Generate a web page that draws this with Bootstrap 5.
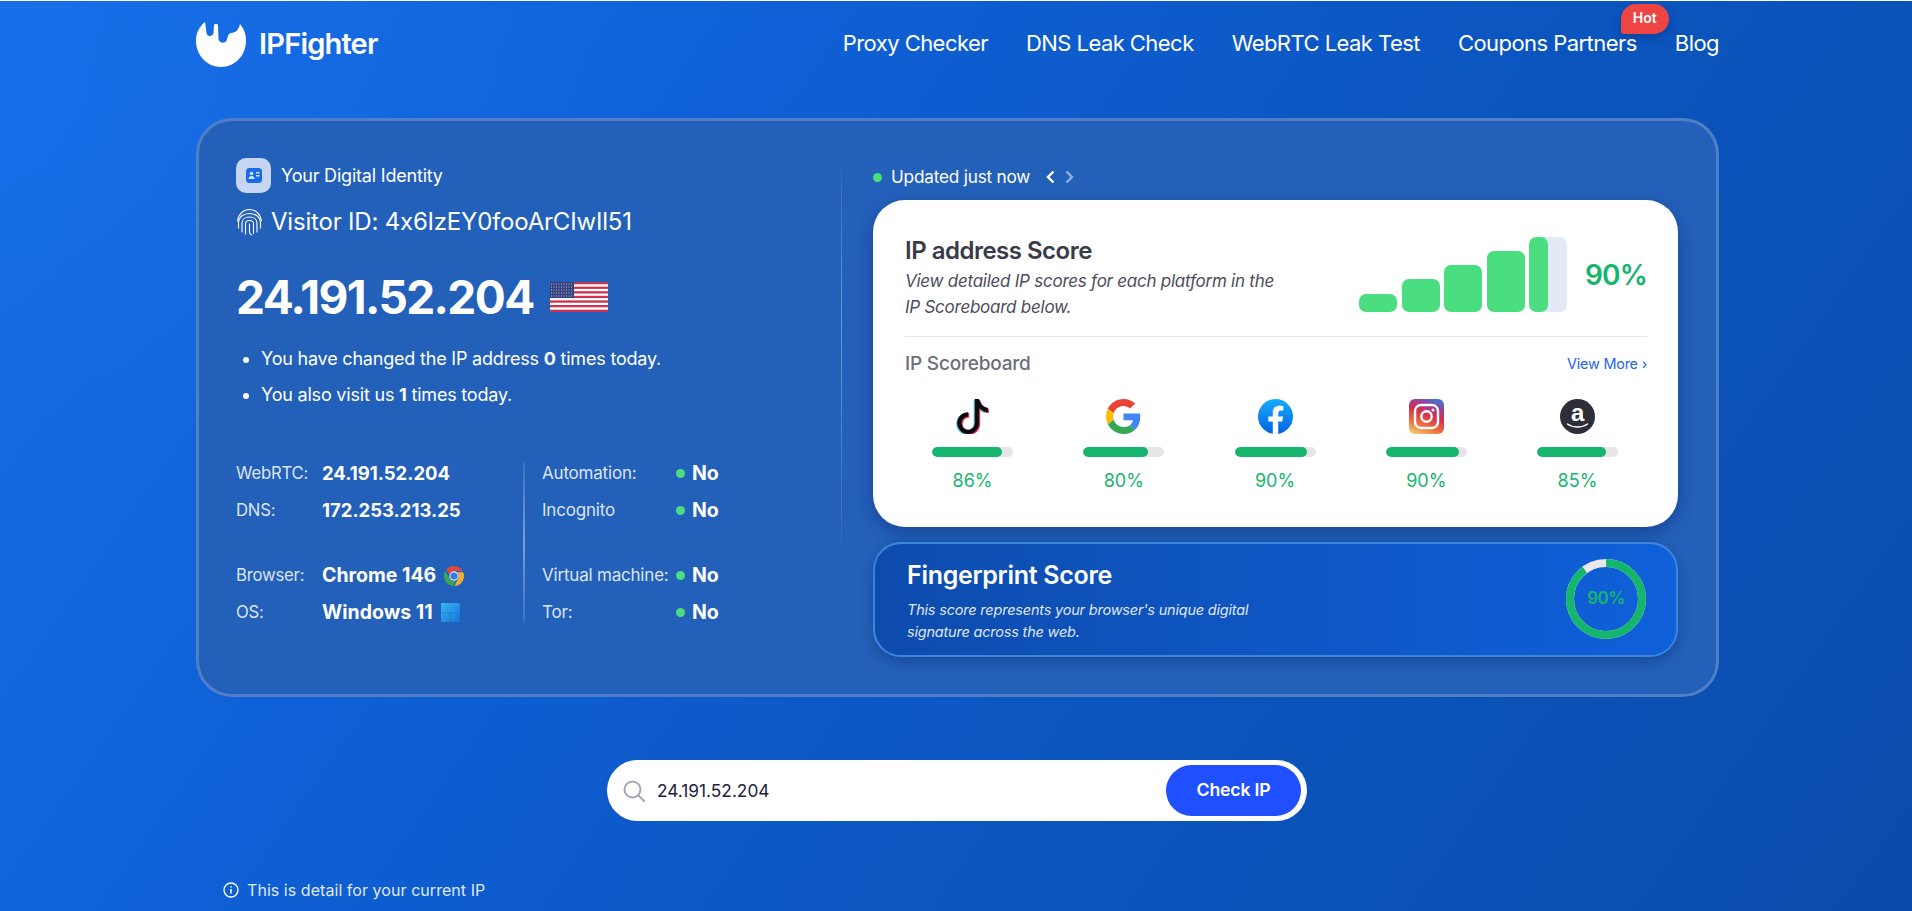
<!DOCTYPE html>
<html lang="en">
<head>
  <meta charset="UTF-8">
  <meta name="viewport" content="width=device-width, initial-scale=1">
  <title>IPFighter</title>
  <link href="https://cdn.jsdelivr.net/npm/bootstrap@5.3.0/dist/css/bootstrap.min.css" rel="stylesheet">
  <style>
    body {
      font-family: "Inter", "Noto Sans", sans-serif;
      letter-spacing: -.2px;
      color: #fff;
      border-top: 1px solid #fff;
      overflow: hidden;
      min-height: 911px;
      background:
        radial-gradient(ellipse 620px 300px at 0 120px, rgba(40,130,255,.12), transparent 100%),
        linear-gradient(125deg, #176ee8 0%, #0f60d6 32%, #0b55bf 62%, #0a4cab 100%);
    }
    .page-wrap { width: 1523px; margin-left: 196px; }
    .top-bar { height: 85px; }
    .logo-text { font-size: 29px; font-weight: 600; letter-spacing: -.8px; margin-left: 13px; }
    .top-links { gap: 38px; }
    .top-links a { color: #fff; text-decoration: none; font-size: 22px; letter-spacing: -.55px; }
    .hot-tag {
      top: -23px; right: -32px; width: 48px; height: 30px;
      background: #ef4444; border-radius: 15px 15px 15px 3px;
      font-size: 14px; font-weight: 600; line-height: 28px; text-align: center; letter-spacing: 0;
      box-shadow: 0 3px 8px rgba(10,40,110,.4);
    }
    .main-panel {
      margin-top: 32px; height: 579px; padding: 37px 36px 36px 37px;
      background: #2360b9; border: 3px solid rgba(255,255,255,.2); border-radius: 36px;
    }
    .left-col { width: 605px; flex: none; }
    .id-icon { width: 35px; height: 35px; border-radius: 10px; background: #c6d6f2; }
    .id-title { font-size: 18px; margin-left: 10px; }
    .visitor-row { margin-top: 14px; height: 30px; font-size: 24px; letter-spacing: -.2px; }
    .ip-row { margin-top: 30px; height: 60px; }
    .ip-big { font-size: 46px; font-weight: 700; letter-spacing: -1.6px; line-height: 60px; }
    .visit-list { margin: 14px 0 0; padding: 0 0 0 25px; font-size: 18px; }
    .visit-list li { height: 36px; line-height: 36px; }
    .info-grid { margin-top: 42px; }
    .info-left { width: 287px; }
    .info-line { height: 37px; align-items: center; display: flex; }
    .info-gap { height: 28px; }
    .info-key { width: 86px; font-size: 16.700px; color: rgba(255,255,255,.85); flex: none; }
    .info-val { font-size: 18.500px; font-weight: 700; letter-spacing: 0; }
    .info-name { font-size: 19.500px; font-weight: 700; letter-spacing: 0; }
    .info-split { width: 2px; margin: 8px 17px 8px 0; background: linear-gradient(180deg, rgba(255,255,255,.1), rgba(255,255,255,.4) 50%, rgba(255,255,255,.1)); }
    .flag-key { width: 134px; font-size: 17px; color: rgba(255,255,255,.85); flex: none; white-space: nowrap; }
    .ok-dot { width: 9px; height: 9px; border-radius: 50%; background: #4ade80; margin-right: 7px; flex: none; }
    .col-split { width: 1px; height: 380px; margin: 10px 31px 0 0; background: linear-gradient(180deg, rgba(255,255,255,.05), rgba(255,255,255,.35) 40%, rgba(255,255,255,.05)); flex: none; }
    .right-col { width: 805px; padding-top: 7px; }
    .updated-row { height: 24px; margin-bottom: 11px; font-size: 17.200px; }
    .updated-row .ok-dot { margin-left: 0; margin-right: 9px; }
    .score-box {
      height: 327px; padding: 36px 31px 0 32px; background: #fff; border-radius: 32px; color: #3a3a48;
      box-shadow: 0 6px 16px rgba(10,40,110,.45);
    }
    .score-top { height: 101px; border-bottom: 1px solid #e4e6ea; }
    .score-title { font-size: 24px; font-weight: 600; line-height: 30px; letter-spacing: -.5px; }
    .score-sub { font-size: 17px; font-style: italic; line-height: 26px; margin: 2px 0 0; width: 385px; color: #4d4d5c; letter-spacing: -.25px; }
    .signal { gap: 4.500px; height: 75px; margin-top: 1px; }
    .sig-bar { width: 38px; background: #4ade80; border-radius: 7px; }
    .sig-track { width: 38px; height: 75px; background: #e2eaf8; border-radius: 7px; overflow: hidden; }
    .sig-fill { width: 19px; height: 100%; background: #4ade80; border-radius: 7px; }
    .score-num { width: 62px; margin: 18px 0 0 18px; font-size: 28px; font-weight: 600; color: #16b56e; letter-spacing: -.8px; white-space: nowrap; }
    .board-head { margin-top: 12px; height: 30px; }
    .board-title { font-size: 19px; font-weight: 500; color: #6d6d7a; }
    .board-more { font-size: 14.400px; color: #2563eb; text-decoration: none; }
    .board-row { margin-top: 20px; padding: 0 29px 0 27px; }
    .board-item { width: 81px; text-align: center; }
    .board-item svg { display: block; margin: 0 auto; }
    .board-bar { height: 10px; margin-top: 13px; background: #e6e6e8; border-radius: 5px; }
    .board-bar .progress-bar { background: #16b56e; border-radius: 5px; }
    .board-pct { margin-top: 11px; line-height: 26px; font-size: 18px; color: #16b56e; letter-spacing: 0; }
    .print-box {
      height: 115px; margin-top: 15px; padding: 16px 30px 0 32px;
      background: linear-gradient(90deg, #0d4cad, #0f60da); border: 2px solid #3b86dc; border-radius: 28px;
      box-shadow: 0 5px 12px rgba(10,40,110,.4);
    }
    .print-title { font-size: 25px; font-weight: 600; line-height: 30px; letter-spacing: -.3px; }
    .print-sub { font-size: 14.500px; font-style: italic; line-height: 22px; margin: 9px 0 0; width: 360px; color: rgba(255,255,255,.88); }
    .ring-wrap { width: 80px; height: 80px; margin-top: -1px; }
    .ring-num { font-size: 17px; font-weight: 600; color: #16b56e; letter-spacing: -.5px; }
    .search-box { width: 700px; height: 61px; margin: 63px 0 0 411px; padding: 5px 6px 5px 16px; background: #fff; border-radius: 31px; }
    .search-input { font-size: 17.300px; color: #1e2240; letter-spacing: 0; padding: 0 0 0 12px; height: 51px; background: transparent; }
    .check-btn { width: 135px; height: 51px; background: #1f4fff; border-radius: 26px; font-size: 17.700px; font-weight: 600; flex: none; padding: 0; letter-spacing: -.2px; }
    .check-btn:hover { background: #1f4fff; }
    .current-note { margin: 57px 0 0 27px; height: 24px; font-size: 16px; color: rgba(255,255,255,.88); letter-spacing: .05px; }
  </style>
</head>
<body>

<div class="page-wrap">
  <nav class="top-bar d-flex align-items-center justify-content-between">
    <a class="d-flex align-items-center text-white text-decoration-none" href="#">
      <svg width="50" height="46" viewBox="0 0 50 46"><path fill="#fff" d="M9 1C4 5 0 11 0 20c0 14 11 26 25 26s25-12 25-26c0-7-2-12-6-17-1 5-4 9-9 9-2 0-3 2-4 6-.5 5-7.5 5-8.500 0L22 4q-2-2.500-4 0l-.5 8c-.5 4-6.500 4-7 0z"/></svg>
      <span class="logo-text">IPFighter</span>
    </a>
    <div class="top-links d-flex align-items-center">
      <a href="#">Proxy Checker</a>
      <a href="#">DNS Leak Check</a>
      <a href="#">WebRTC Leak Test</a>
      <a href="#" class="position-relative">Coupons Partners<span class="hot-tag position-absolute">Hot</span></a>
      <a href="#">Blog</a>
    </div>
  </nav>

  <section class="main-panel d-flex">
    <div class="left-col">
      <div class="d-flex align-items-center">
        <span class="id-icon d-flex align-items-center justify-content-center">
          <svg width="16" height="15" viewBox="0 0 16 15"><rect width="16" height="15" rx="3.500" fill="#1a6de8"/><circle cx="5.500" cy="5.500" r="1.800" fill="#d5e3fa"/><path fill="#d5e3fa" d="M2.500 11c0-2 1.300-3 3-3s3 1 3 3z"/><rect x="10" y="4" width="3.500" height="1.500" fill="#d5e3fa"/><rect x="10" y="7" width="3.500" height="1.500" fill="#d5e3fa"/></svg>
        </span>
        <span class="id-title">Your Digital Identity</span>
      </div>
      <div class="visitor-row d-flex align-items-center">
        <svg class="me-2" width="27" height="28" viewBox="0 0 27 28" fill="none" stroke="#fff" stroke-width="1.100" stroke-linecap="round"><path d="M1.500 13C2.500 6 7.500 1.500 13.500 1.500S24.500 6 25.500 13"/><path d="M2.500 20v-5c0-6 5-9.500 11-9.500s11 3.500 11 9.500v5"/><path d="M6 24v-9c0-3.800 3.300-6 7.500-6s7.500 2.200 7.500 6v9"/><path d="M9.500 26V15.500c0-2 1.800-3 4-3s4 1 4 3v10"/><path d="M13.500 16v8c0 1.500.8 2.500 2 3"/></svg>
        <span>Visitor ID: 4x6IzEY0fooArCIwIl51</span>
      </div>
      <div class="ip-row d-flex align-items-center">
        <span class="ip-big">24.191.52.204</span>
        <svg class="ms-3" width="58" height="30" viewBox="0 0 58 30">
          <rect width="58" height="30" fill="#fff"/>
          <g fill="#c8354f"><rect width="58" height="2.300"/><rect y="4.600" width="58" height="2.300"/><rect y="9.200" width="58" height="2.300"/><rect y="13.800" width="58" height="2.300"/><rect y="18.400" width="58" height="2.300"/><rect y="23" width="58" height="2.300"/><rect y="27.700" width="58" height="2.300"/></g>
          <rect width="24" height="16" fill="#33417e"/>
          <g stroke="#c5cbe2" stroke-width="1" stroke-dasharray="1 1.500"><path d="M1 2h22M1 5h22M1 8h22M1 11h22M1 14h22"/></g>
        </svg>
      </div>
      <ul class="visit-list">
        <li>You have changed the IP address <b>0</b> times today.</li>
        <li>You also visit us <b>1</b> times today.</li>
      </ul>
      <div class="info-grid d-flex">
        <div class="info-left">
          <div class="info-line"><span class="info-key">WebRTC:</span><span class="info-val">24.191.52.204</span></div>
          <div class="info-line"><span class="info-key">DNS:</span><span class="info-val">172.253.213.25</span></div>
          <div class="info-gap"></div>
          <div class="info-line"><span class="info-key">Browser:</span><span class="info-name">Chrome 146</span>
            <svg class="ms-2" width="20" height="20" viewBox="0 0 20 20"><path fill="#e0483c" d="M10 0a10 10 0 0 1 8.660 5H10a5 5 0 0 0-4.800 3.600L2.300 3.600A10 10 0 0 1 10 0z"/><path fill="#3aa655" d="M1.300 5A10 10 0 0 0 9 19.950l3-5.200A5 5 0 0 1 5.700 12.500z"/><path fill="#f4ae2c" d="M19.300 6.300H13.200a5 5 0 0 1 1.100 6.200L10.500 20A10 10 0 0 0 19.300 6.300z"/><circle cx="10" cy="10" r="4.700" fill="#e4edf9"/><circle cx="10" cy="10" r="3.600" fill="#3678dc"/></svg>
          </div>
          <div class="info-line"><span class="info-key">OS:</span><span class="info-name">Windows 11</span>
            <svg class="ms-2" width="19" height="19" viewBox="0 0 19 19"><defs><linearGradient id="winBlue" x1="0" y1="0" x2="1" y2="1"><stop offset="0" stop-color="#38b6f4"/><stop offset="1" stop-color="#1673d8"/></linearGradient></defs><rect width="19" height="19" rx="1" fill="url(#winBlue)"/><path d="M9.500 10v9M0 10h19" stroke="#1a78d6" stroke-width=".8"/></svg>
          </div>
        </div>
        <div class="info-split"></div>
        <div>
          <div class="info-line"><span class="flag-key">Automation:</span><span class="ok-dot"></span><span class="info-name">No</span></div>
          <div class="info-line"><span class="flag-key">Incognito</span><span class="ok-dot"></span><span class="info-name">No</span></div>
          <div class="info-gap"></div>
          <div class="info-line"><span class="flag-key">Virtual machine:</span><span class="ok-dot"></span><span class="info-name">No</span></div>
          <div class="info-line"><span class="flag-key">Tor:</span><span class="ok-dot"></span><span class="info-name">No</span></div>
        </div>
      </div>
    </div>

    <div class="col-split"></div>

    <div class="right-col">
      <div class="updated-row d-flex align-items-center">
        <span class="ok-dot"></span><span>Updated just now</span>
        <svg class="ms-3" width="10" height="14" viewBox="0 0 10 14" fill="none" stroke="#fff" stroke-width="2.400"><path d="M7.500 1.500 2 7l5.500 5.500"/></svg>
        <svg class="ms-2" width="10" height="14" viewBox="0 0 10 14" fill="none" stroke="#8fb0e4" stroke-width="2.400"><path d="M2.500 1.500 8 7l-5.500 5.500"/></svg>
      </div>

      <div class="score-box">
        <div class="score-top d-flex justify-content-between">
          <div>
            <div class="score-title">IP address Score</div>
            <p class="score-sub">View detailed IP scores for each platform in the IP Scoreboard below.</p>
          </div>
          <div class="d-flex">
            <div class="signal d-flex align-items-end">
              <div class="sig-bar" style="height:18px"></div>
              <div class="sig-bar" style="height:33px"></div>
              <div class="sig-bar" style="height:47px"></div>
              <div class="sig-bar" style="height:61px"></div>
              <div class="sig-track"><div class="sig-fill"></div></div>
            </div>
            <div class="score-num align-self-start">90%</div>
          </div>
        </div>

        <div class="board-head d-flex align-items-center justify-content-between">
          <span class="board-title">IP Scoreboard</span>
          <a class="board-more" href="#">View More ›</a>
        </div>

        <div class="board-row d-flex justify-content-between">
          <div class="board-item">
            <svg width="35" height="35" viewBox="0 0 16 16"><path fill="#5fd3e0" transform="translate(-.5 .4)" d="M9 0h1.980c.144.715.54 1.617 1.235 2.512C12.895 3.389 13.797 4 15 4v2c-1.753 0-3.070-.814-4-1.829V11a5 5 0 1 1-5-5v2a3 3 0 1 0 3 3V0Z"/><path fill="#ee2a58" transform="translate(.5 .4)" d="M9 0h1.980c.144.715.54 1.617 1.235 2.512C12.895 3.389 13.797 4 15 4v2c-1.753 0-3.070-.814-4-1.829V11a5 5 0 1 1-5-5v2a3 3 0 1 0 3 3V0Z"/><path fill="#0a0a0f" d="M9 0h1.980c.144.715.54 1.617 1.235 2.512C12.895 3.389 13.797 4 15 4v2c-1.753 0-3.070-.814-4-1.829V11a5 5 0 1 1-5-5v2a3 3 0 1 0 3 3V0Z"/></svg>
            <div class="progress board-bar"><div class="progress-bar" style="width:86%"></div></div>
            <div class="board-pct">86%</div>
          </div>
          <div class="board-item">
            <svg width="35" height="35" viewBox="0 0 48 48"><path fill="#EA4335" d="M24 9.500c3.540 0 6.710 1.220 9.210 3.600l6.850-6.850C35.900 2.380 30.470 0 24 0 14.620 0 6.510 5.380 2.560 13.220l7.980 6.190C12.430 13.720 17.740 9.500 24 9.500z"/><path fill="#4285F4" d="M46.980 24.550c0-1.570-.15-3.090-.38-4.550H24v9.020h12.940c-.58 2.960-2.260 5.480-4.780 7.180l7.730 6c4.510-4.180 7.090-10.360 7.090-17.650z"/><path fill="#FBBC05" d="M10.530 28.590c-.48-1.450-.76-2.990-.76-4.590s.27-3.140.76-4.590l-7.980-6.190C.92 16.460 0 20.120 0 24c0 3.880.92 7.540 2.560 10.780l7.970-6.190z"/><path fill="#34A853" d="M24 48c6.480 0 11.930-2.130 15.890-5.810l-7.730-6c-2.150 1.450-4.920 2.300-8.160 2.300-6.260 0-11.570-4.220-13.470-9.910l-7.980 6.190C6.510 42.620 14.620 48 24 48z"/></svg>
            <div class="progress board-bar"><div class="progress-bar" style="width:80%"></div></div>
            <div class="board-pct">80%</div>
          </div>
          <div class="board-item">
            <svg width="35" height="35" viewBox="0 0 24 24"><defs><linearGradient id="fbBlue" x1="0" y1="0" x2="0" y2="1"><stop offset="0" stop-color="#18acfe"/><stop offset="1" stop-color="#0163e0"/></linearGradient></defs><circle cx="12" cy="12" r="12" fill="url(#fbBlue)"/><path fill="#fff" d="M16.670 15.470l.53-3.470h-3.330V9.750c0-.95.46-1.870 1.960-1.870h1.510V4.930s-1.370-.23-2.690-.23c-2.740 0-4.530 1.660-4.530 4.670V12H7.080v3.470h3.040v8.380a12 12 0 0 0 3.750 0v-8.380z"/></svg>
            <div class="progress board-bar"><div class="progress-bar" style="width:90%"></div></div>
            <div class="board-pct">90%</div>
          </div>
          <div class="board-item">
            <svg width="35" height="35" viewBox="0 0 35 35"><defs><linearGradient id="igGrad" x1=".2" y1="1" x2=".6" y2="0"><stop offset="0" stop-color="#f2c46c"/><stop offset=".3" stop-color="#ee6a3c"/><stop offset=".6" stop-color="#d4304f"/><stop offset=".85" stop-color="#9a3f9e"/><stop offset="1" stop-color="#4c6fc8"/></linearGradient></defs><rect width="35" height="35" rx="6" fill="url(#igGrad)"/><rect x="6" y="6" width="23" height="23" rx="6" fill="none" stroke="#fff" stroke-width="2.400"/><circle cx="17.500" cy="17.500" r="5.200" fill="none" stroke="#fff" stroke-width="2.400"/><circle cx="24" cy="11" r="1.500" fill="#fff"/></svg>
            <div class="progress board-bar"><div class="progress-bar" style="width:90%"></div></div>
            <div class="board-pct">90%</div>
          </div>
          <div class="board-item">
            <svg width="35" height="35" viewBox="0 0 35 35"><circle cx="17.500" cy="17.500" r="17.500" fill="#2e2e38"/><text x="17.500" y="22" text-anchor="middle" font-family="Liberation Sans, sans-serif" font-size="24" font-weight="700" fill="#fff">a</text><path d="M7.500 25c5.500 4 14.500 4 20 0" fill="none" stroke="#fff" stroke-width="1.500" stroke-linecap="round"/></svg>
            <div class="progress board-bar"><div class="progress-bar" style="width:85%"></div></div>
            <div class="board-pct">85%</div>
          </div>
        </div>
      </div>

      <div class="print-box d-flex justify-content-between">
        <div>
          <div class="print-title">Fingerprint Score</div>
          <p class="print-sub">This score represents your browser's unique digital signature across the web.</p>
        </div>
        <div class="ring-wrap position-relative d-flex align-items-center justify-content-center">
          <svg class="position-absolute top-0 start-0" width="80" height="80" viewBox="0 0 80 80"><circle cx="40" cy="40" r="36" fill="none" stroke="#e8e8ea" stroke-width="8"/><circle cx="40" cy="40" r="36" fill="none" stroke="#16b56e" stroke-width="8" pathLength="100" stroke-dasharray="90 100" transform="rotate(-90 40 40)"/></svg>
          <span class="ring-num">90%</span>
        </div>
      </div>
    </div>
  </section>

  <form class="search-box d-flex align-items-center">
    <svg width="22" height="22" viewBox="0 0 22 22" fill="none" stroke="#a8a4b8" stroke-width="2" class="flex-shrink-0"><circle cx="9.500" cy="9.500" r="8"/><path d="M15.500 15.500 21 21" stroke-linecap="round"/></svg>
    <input class="form-control border-0 shadow-none search-input" type="text" value="24.191.52.204">
    <button class="btn check-btn text-white" type="button">Check IP</button>
  </form>

  <div class="current-note d-flex align-items-center">
    <svg class="me-2" width="16" height="16" viewBox="0 0 16 16" fill="none" stroke="#fff" stroke-width="1.300"><circle cx="8" cy="8" r="7"/><path d="M8 7v4.500M8 4.200v1.300" stroke-width="1.600"/></svg>
    <span>This is detail for your current IP</span>
  </div>
</div>

<script src="https://cdn.jsdelivr.net/npm/bootstrap@5.3.0/dist/js/bootstrap.bundle.min.js"></script>
</body>
</html>
